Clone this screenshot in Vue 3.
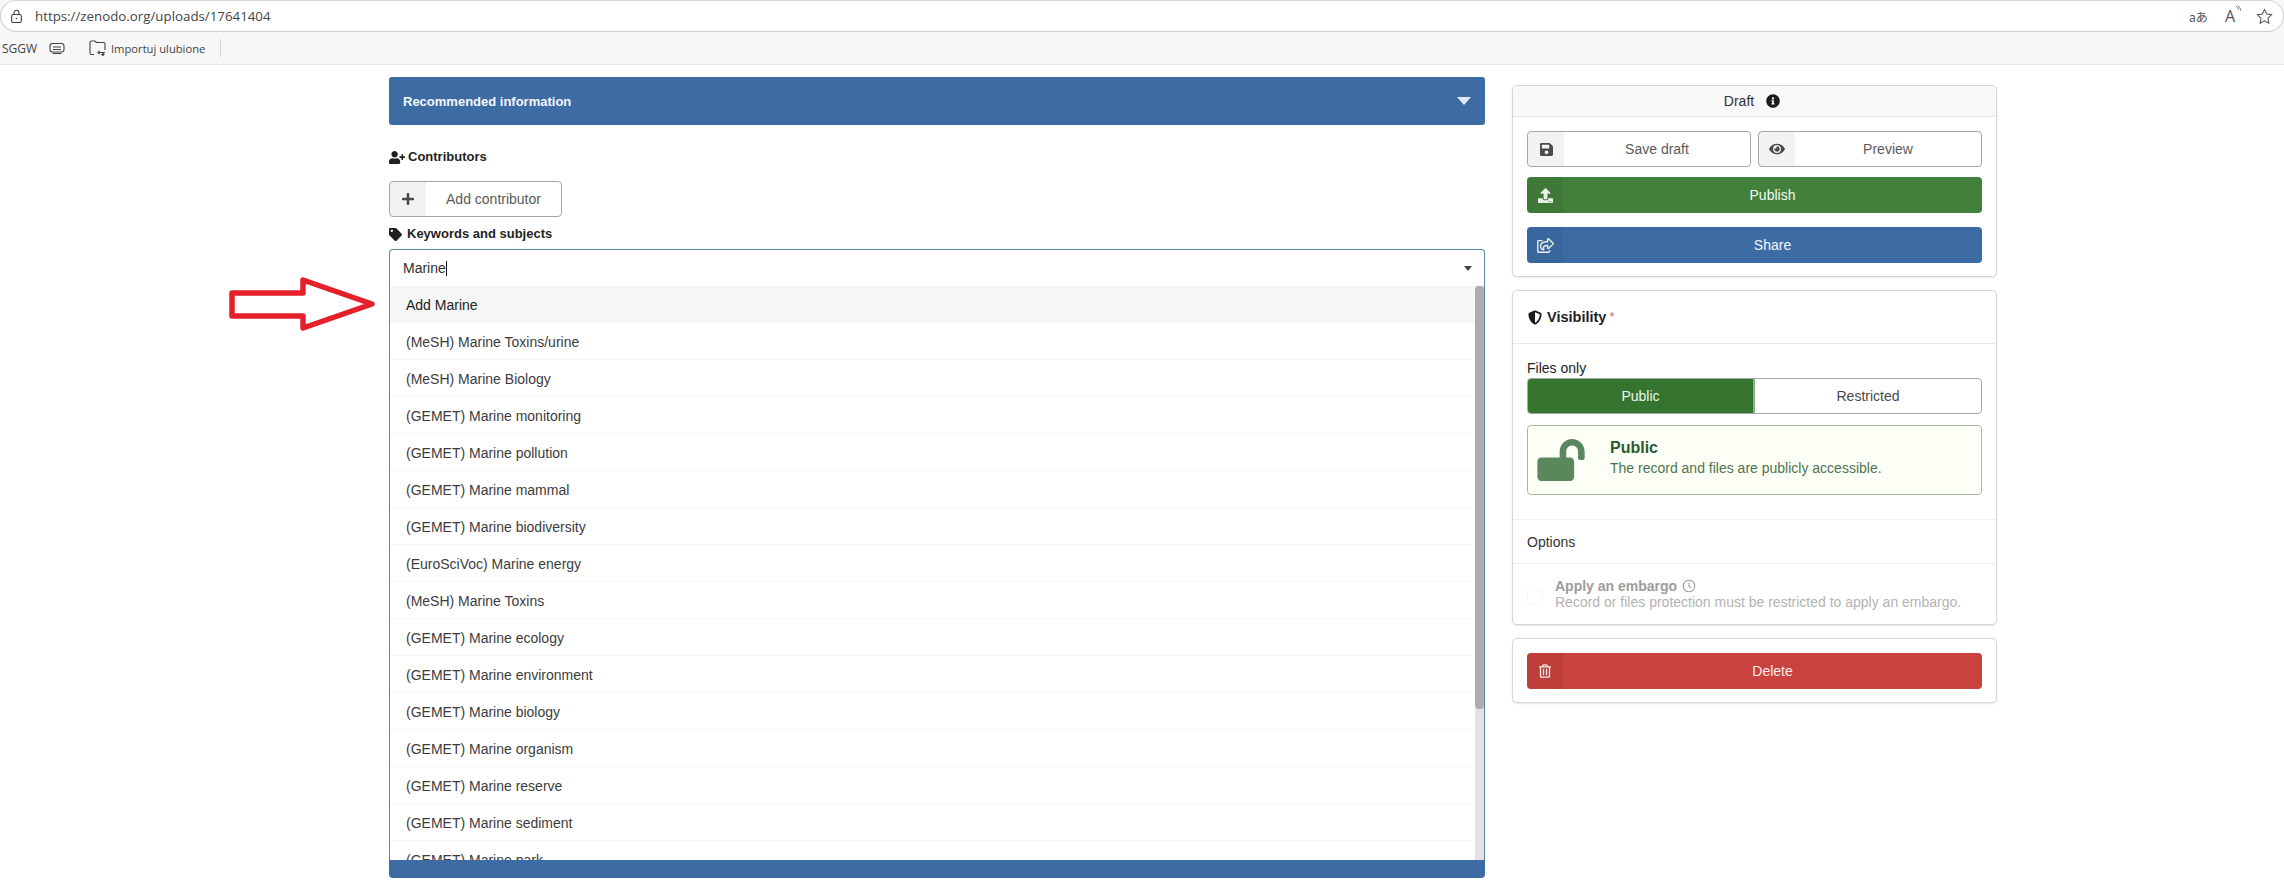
<script setup>
const options = [
  '(MeSH) Marine Toxins/urine', '(MeSH) Marine Biology', '(GEMET) Marine monitoring',
  '(GEMET) Marine pollution', '(GEMET) Marine mammal', '(GEMET) Marine biodiversity',
  '(EuroSciVoc) Marine energy', '(MeSH) Marine Toxins', '(GEMET) Marine ecology',
  '(GEMET) Marine environment', '(GEMET) Marine biology', '(GEMET) Marine organism',
  '(GEMET) Marine reserve', '(GEMET) Marine sediment', '(GEMET) Marine park'
]
const icons = {
  save: ['0 0 448 512', 'M433.941 129.941l-83.882-83.882A48 48 0 0 0 316.118 32H48C21.49 32 0 53.49 0 80v352c0 26.51 21.49 48 48 48h352c26.51 0 48-21.49 48-48V163.882a48 48 0 0 0-14.059-33.941zM224 416c-35.346 0-64-28.654-64-64 0-35.346 28.654-64 64-64s64 28.654 64 64c0 35.346-28.654 64-64 64zm96-304.52V212c0 6.627-5.373 12-12 12H76c-6.627 0-12-5.373-12-12V108c0-6.627 5.373-12 12-12h228.52c3.183 0 6.235 1.264 8.485 3.515l3.48 3.48A11.996 11.996 0 0 1 320 111.48z'],
  eye: ['0 0 576 512', 'M572.52 241.4C518.29 135.59 410.93 64 288 64S57.68 135.64 3.48 241.41a32.35 32.35 0 0 0 0 29.19C57.71 376.41 165.07 448 288 448s230.32-71.64 284.52-177.41a32.35 32.35 0 0 0 0-29.19zM288 400a144 144 0 1 1 144-144 143.93 143.93 0 0 1-144 144zm0-240a95.31 95.31 0 0 0-25.31 3.79 47.85 47.85 0 0 1-66.9 66.9A95.78 95.78 0 1 0 288 160z'],
  plus: ['0 0 448 512', 'M416 208H272V64c0-17.67-14.33-32-32-32h-32c-17.67 0-32 14.33-32 32v144H32c-17.67 0-32 14.33-32 32v32c0 17.67 14.33 32 32 32h144v144c0 17.67 14.33 32 32 32h32c17.67 0 32-14.33 32-32V304h144c17.67 0 32-14.33 32-32v-32c0-17.67-14.33-32-32-32z'],
  upload: ['0 0 512 512', 'M296 384h-80c-13.3 0-24-10.7-24-24V192h-87.7c-17.8 0-26.7-21.5-14.1-34.1L242.3 5.7c7.5-7.5 19.8-7.5 27.3 0l152.2 152.2c12.6 12.6 3.7 34.1-14.1 34.1H320v168c0 13.3-10.7 24-24 24zm216-8v112c0 13.3-10.7 24-24 24H24c-13.3 0-24-10.7-24-24V376c0-13.3 10.7-24 24-24h136v8c0 30.9 25.1 56 56 56h80c30.9 0 56-25.1 56-56v-8h136c13.3 0 24 10.7 24 24zm-124 88c0-11-9-20-20-20s-20 9-20 20 9 20 20 20 20-9 20-20zm64 0c0-11-9-20-20-20s-20 9-20 20 9 20 20 20 20-9 20-20z'],
  info: ['0 0 512 512', 'M256 8C119.043 8 8 119.083 8 256c0 136.997 111.043 248 248 248s248-111.003 248-248C504 119.083 392.957 8 256 8zm0 110c23.196 0 42 18.804 42 42s-18.804 42-42 42-42-18.804-42-42 18.804-42 42-42zm56 254c0 6.627-5.373 12-12 12h-88c-6.627 0-12-5.373-12-12v-24c0-6.627 5.373-12 12-12h12v-64h-12c-6.627 0-12-5.373-12-12v-24c0-6.627 5.373-12 12-12h64c6.627 0 12 5.373 12 12v100h12c6.627 0 12 5.373 12 12v24z'],
  tag: ['0 0 512 512', 'M0 252.118V48C0 21.49 21.49 0 48 0h204.118a48 48 0 0 1 33.941 14.059l211.882 211.882c18.745 18.745 18.745 49.137 0 67.882L293.823 497.941c-18.745 18.745-49.137 18.745-67.882 0L14.059 286.059A48 48 0 0 1 0 252.118zM112 64c-26.51 0-48 21.49-48 48s21.49 48 48 48 48-21.49 48-48-21.49-48-48-48z'],
  userPlus: ['0 0 640 512', 'M624 208h-64v-64c0-8.8-7.2-16-16-16h-32c-8.8 0-16 7.2-16 16v64h-64c-8.8 0-16 7.2-16 16v32c0 8.8 7.2 16 16 16h64v64c0 8.8 7.2 16 16 16h32c8.8 0 16-7.2 16-16v-64h64c8.8 0 16-7.2 16-16v-32c0-8.8-7.2-16-16-16zm-400 48c70.7 0 128-57.3 128-128S294.7 0 224 0 96 57.3 96 128s57.3 128 128 128zm89.6 32h-16.7c-22.2 10.2-46.9 16-72.9 16s-50.6-5.8-72.9-16h-16.7C60.2 288 0 348.2 0 422.4V464c0 26.5 21.5 48 48 48h352c26.5 0 48-21.5 48-48v-41.6c0-74.2-60.2-134.4-134.4-134.4z'],
  shield: ['0 0 512 512', 'M466.5 83.7l-192-80a48.15 48.15 0 0 0-36.9 0l-192 80C27.7 91.1 16 108.6 16 128c0 198.5 114.5 335.7 221.5 380.3 11.8 4.9 25.1 4.9 36.9 0C360.1 472.6 496 349.3 496 128c0-19.4-11.7-36.9-29.5-44.3zM256.1 446.3l-.1-381 175.9 73.3c-3.3 151.4-82.1 261.1-175.8 307.7z'],
  unlock: ['0 0 576 512', 'M423.5 0C339.5.3 272 69.5 272 153.5V224H48c-26.5 0-48 21.5-48 48v192c0 26.5 21.5 48 48 48h352c26.5 0 48-21.5 48-48V272c0-26.5-21.5-48-48-48h-48v-71.1c0-39.6 31.7-72.5 71.3-72.9 40-.4 72.7 32.1 72.7 72v80c0 13.3 10.7 24 24 24h32c13.3 0 24-10.7 24-24v-80C576 68 507.5-.3 423.5 0z'],
  trash: ['0 0 448 512', 'M268 416h24a12 12 0 0 0 12-12V188a12 12 0 0 0-12-12h-24a12 12 0 0 0-12 12v216a12 12 0 0 0 12 12zM432 80h-82.41l-34-56.7A48 48 0 0 0 274.41 0H173.59a48 48 0 0 0-41.16 23.3L98.41 80H16A16 16 0 0 0 0 96v16a16 16 0 0 0 16 16h16v336a48 48 0 0 0 48 48h288a48 48 0 0 0 48-48V128h16a16 16 0 0 0 16-16V96a16 16 0 0 0-16-16zM171.84 50.91A6 6 0 0 1 177 48h94a6 6 0 0 1 5.15 2.91L293.61 80H154.39zM368 464H80V128h288zm-212-48h24a12 12 0 0 0 12-12V188a12 12 0 0 0-12-12h-24a12 12 0 0 0-12 12v216a12 12 0 0 0 12 12z'],
  share: ['0 0 576 512', 'M561.938 158.06L417.94 14.092C387.926-15.922 336 5.097 336 48.032v57.198c-42.45 1.88-84.03 6.55-120.76 17.99-35.17 10.95-63.07 27.58-82.91 49.42C108.22 199.2 96 232.6 96 271.94c0 61.697 33.178 112.455 84.87 144.76 37.546 23.508 85.248-12.651 71.02-55.74-15.515-47.119-17.156-70.923 84.11-78.76V336c0 42.993 51.968 63.913 81.94 33.94l143.998-144c18.75-18.74 18.75-49.14 0-67.88zM384 336V232.16C255.309 234.082 166.492 255.35 206.31 376 176.79 357.55 144 324.08 144 271.94c0-109.334 129.14-118.947 240-119.85V48l144 144-144 144zm24.74 84.493a82.658 82.658 0 0 0 20.974-9.303c7.976-4.952 18.286.826 18.286 10.214V464c0 26.51-21.49 48-48 48H48c-26.51 0-48-21.49-48-48V112c0-26.51 21.49-48 48-48h132c6.627 0 12 5.373 12 12v4.486c0 4.917-2.987 9.369-7.569 11.152-13.702 5.331-26.396 11.537-38.05 18.585a12.138 12.138 0 0 1-6.28 1.777H54a6 6 0 0 0-6 6v340a6 6 0 0 0 6 6h340a6 6 0 0 0 6-6v-25.966c0-5.37 3.579-10.059 8.74-11.541z']
}
</script>

<template>
  <div class="page">
    <header class="chrome">
      <div class="address">
        <svg class="lock" viewBox="0 0 16 18" width="13" height="15" fill="none" stroke="#3c3c3c" stroke-width="1.3">
          <rect x="2" y="6.5" width="12" height="10" rx="2.2" />
          <path d="M5 6.5V4.2a3 3 0 0 1 6 0v2.3" />
          <circle cx="8" cy="11.5" r=".9" fill="#3c3c3c" stroke="none" />
        </svg>
        <span class="url">https://zenodo.org/uploads/17641404</span>
        <span class="addr-tools">
          <span class="translate">aあ</span>
          <span class="read">A<svg viewBox="0 0 8 10" width="7" height="9" fill="none" stroke="#555" stroke-width=".9"><path d="M1 1q3 2 3 4M3.500 .5q3 2.500 3 6" /></svg></span>
          <svg viewBox="0 0 18 18" width="17" height="17" fill="none" stroke="#555" stroke-width="1.1"><path d="M9 1.500l2.300 4.900 5.200.7-3.800 3.700.9 5.300L9 13.500l-4.600 2.600.9-5.300L1.500 7.100l5.200-.7z" /></svg>
        </span>
      </div>
      <nav class="bookmarks">
        <span class="bm-first">SGGW</span>
        <svg class="bm-device" viewBox="0 0 16 13" width="16" height="13" fill="none" stroke="#444" stroke-width="1.1">
          <rect x="1" y="1.500" width="14" height="8.500" rx="2.500" />
          <path d="M4 5h8M4 7.500h8M3.500 11.500h9" />
        </svg>
        <svg class="bm-folder" viewBox="0 0 17 16" width="17" height="16" fill="none" stroke="#444" stroke-width="1.1">
          <path d="M5 14.500H2.500a1.500 1.500 0 0 1-1.500-1.500V2.500A1.500 1.500 0 0 1 2.500 1H6l1.500 1.500h7A1.500 1.500 0 0 1 16 4v6" />
          <path d="M16 12.500H9m1.500-1.500L9 12.500l1.500 1.500M12 14.500h3m-1.500-1.500l1.500 1.500-1.500 1.500" />
        </svg>
        <span class="bm-text">Importuj ulubione</span>
        <i class="bm-sep"></i>
      </nav>
    </header>

    <main class="main">
      <section class="left">
        <div class="bar">
          <span>Recommended information</span>
          <svg viewBox="0 0 14 8" width="14" height="8"><path d="M0 0h14L7 8z" fill="#fff" fill-opacity=".85" /></svg>
        </div>

        <h3 class="field-label contributors">
          <svg :viewBox="icons.userPlus[0]" width="16" height="13"><path :d="icons.userPlus[1]" /></svg>
          Contributors
        </h3>
        <button class="btn basic add-contrib">
          <span class="btn-icon"><svg :viewBox="icons.plus[0]" width="12" height="14"><path :d="icons.plus[1]" /></svg></span>
          <span class="btn-text">Add contributor</span>
        </button>

        <h3 class="field-label keywords">
          <svg :viewBox="icons.tag[0]" width="13" height="13"><path :d="icons.tag[1]" /></svg>
          Keywords and subjects
        </h3>
        <div class="dropdown">
          <div class="search">
            <span class="typed">Marine</span><i class="caret"></i>
            <svg class="arrow" viewBox="0 0 8 5" width="8" height="5"><path d="M0 0h8L4 5z" fill="#444" /></svg>
          </div>
          <div class="menu">
            <ul class="items">
              <li class="item active">Add Marine</li>
              <li v-for="o in options" :key="o" class="item">{{ o }}</li>
            </ul>
            <div class="scrollbar"><div class="thumb"></div></div>
          </div>
        </div>
        <div class="under-strip"></div>
      </section>

      <aside class="right">
        <div class="card">
          <div class="card-head">
            <span>Draft</span>
            <svg :viewBox="icons.info[0]" width="14" height="14"><path :d="icons.info[1]" fill="#1b1c1d" /></svg>
          </div>
          <div class="card-body actions">
            <div class="pair">
              <button class="btn basic">
                <span class="btn-icon"><svg :viewBox="icons.save[0]" width="13" height="15"><path :d="icons.save[1]" /></svg></span>
                <span class="btn-text">Save draft</span>
              </button>
              <button class="btn basic">
                <span class="btn-icon"><svg :viewBox="icons.eye[0]" width="16" height="14"><path :d="icons.eye[1]" /></svg></span>
                <span class="btn-text">Preview</span>
              </button>
            </div>
            <button class="btn green">
              <span class="btn-icon"><svg :viewBox="icons.upload[0]" width="15" height="15"><path :d="icons.upload[1]" /></svg></span>
              <span class="btn-text">Publish</span>
            </button>
            <button class="btn blue share">
              <span class="btn-icon"><svg :viewBox="icons.share[0]" width="17" height="15"><path :d="icons.share[1]" /></svg></span>
              <span class="btn-text">Share</span>
            </button>
          </div>
        </div>

        <div class="card">
          <div class="vis-title">
            <svg :viewBox="icons.shield[0]" width="14" height="15"><path :d="icons.shield[1]" fill="#1b1c1d" /></svg>
            <strong>Visibility</strong><span class="req">*</span>
          </div>
          <div class="vis-body">
            <div class="files-only">Files only</div>
            <div class="toggle">
              <span class="on">Public</span>
              <span class="off">Restricted</span>
            </div>
            <div class="message">
              <svg :viewBox="icons.unlock[0]" width="48" height="42"><path :d="icons.unlock[1]" fill="#5b875c" /></svg>
              <div class="msg-copy">
                <div class="msg-head">Public</div>
                <div class="msg-text">The record and files are publicly accessible.</div>
              </div>
            </div>
          </div>
          <div class="options">Options</div>
          <div class="embargo">
            <i class="checkbox"></i>
            <div>
              <div class="emb-head">
                Apply an embargo
                <svg viewBox="0 0 16 16" width="14" height="14" fill="none" stroke="#9a9a9a" stroke-width="1.2"><circle cx="8" cy="8" r="6.600" /><path d="M8 4v4.200l2.600 1.800" /></svg>
              </div>
              <div class="emb-sub">Record or files protection must be restricted to apply an embargo.</div>
            </div>
          </div>
        </div>

        <div class="card delete-card">
          <button class="btn red">
            <span class="btn-icon"><svg :viewBox="icons.trash[0]" width="12" height="14"><path :d="icons.trash[1]" /></svg></span>
            <span class="btn-text">Delete</span>
          </button>
        </div>
      </aside>
    </main>

    <svg class="annotation" viewBox="0 0 150 56" width="150" height="56" fill="none">
      <path d="M3 16H74V3L143 27 74 51V39H3Z" stroke="#e5202b" stroke-width="5.500" stroke-linejoin="round" />
    </svg>
  </div>
</template>

<style>
html, body { margin: 0; background: #fff; overflow: hidden; }
</style>

<style scoped>
* { box-sizing: border-box; }
.page {
  position: relative;
  width: 2284px;
  height: 896px;
  overflow: hidden;
  font-family: "Liberation Sans", Arial, sans-serif;
  font-size: 14px;
  color: #212121;
}
.chrome {
  height: 65px;
  background: #f7f7f7;
  border-bottom: 1px solid #e6e6e6;
}
.address {
  height: 32px;
  display: flex;
  align-items: center;
  padding: 0 10px 0 9px;
  background: #fff;
  border: 1px solid #cfcfcf;
  border-top-color: #d8d8d8;
  border-radius: 16px;
  font-family: "Open Sans", sans-serif;
}
.lock { margin-right: 12px; }
.url { font-size: 13.300px; color: #444; }
.addr-tools {
  margin-left: auto;
  display: flex;
  align-items: center;
  color: #555;
}
.translate { font: 12px "Noto Sans CJK JP", "Noto Sans", sans-serif; margin-right: 17px; }
.read { font: 16px "Open Sans", sans-serif; margin-right: 14px; display: flex; align-items: flex-start; }
.bookmarks {
  height: 32px;
  display: flex;
  align-items: center;
  font: 11.200px "Open Sans", sans-serif;
  color: #444;
  padding-left: 2px;
}
.bm-first { width: 46px; font-size: 12px; }
.bm-device { margin-right: 24px; margin-left: 1px; }
.bm-folder { margin-right: 5px; }
.bm-sep { width: 1px; height: 18px; background: #d6d6d6; margin-left: 15px; }

.main {
  display: flex;
  gap: 27px;
  padding: 12px 0 0 389px;
}
.left { width: 1096px; flex: none; }
.bar {
  height: 48px;
  display: flex;
  align-items: center;
  justify-content: space-between;
  padding: 0 14px;
  background: #3d6ca5;
  border-radius: 3px;
  color: #f4f7fb;
  font-weight: 700;
  font-size: 13px;
}
.field-label {
  margin: 0;
  height: 20px;
  display: flex;
  align-items: center;
  gap: 4px;
  font-size: 13px;
  line-height: 20px;
  font-weight: 700;
  color: #1f1f1f;
}
.field-label svg { fill: #1f1f1f; flex: none; }
.contributors { margin-top: 22px; gap: 3px; }
.keywords { margin-top: 7px; gap: 5px; }

.btn {
  display: flex;
  align-items: stretch;
  width: 100%;
  height: 36px;
  padding: 0;
  border: 0;
  border-radius: 4px;
  overflow: hidden;
  font: 14px "Liberation Sans", Arial, sans-serif;
  background: #fff;
}
.btn.add-contrib { width: 173px; margin-top: 14px; }
.btn-icon {
  width: 36px;
  flex: none;
  display: flex;
  align-items: center;
  justify-content: center;
  background: rgba(0, 0, 0, .05);
}
.btn-text { flex: 1; align-self: center; text-align: center; }
.btn.basic { border: 1px solid #a6a6a6; color: #5a5a5a; }
.btn.basic svg { fill: #4a4a4a; }
.btn.green { background: #43803b; color: #f4fbf2; margin-top: 10px; }
.btn.blue { background: #3d6ca5; color: #f3f7fb; }
.btn.red { background: #c9423e; color: #fbeeee; }
.btn.green svg, .btn.blue svg, .btn.red svg { fill: #e8f0e8; }
.share { margin-top: 14px; }

.dropdown {
  height: 611px;
  margin-top: 5px;
  display: flex;
  flex-direction: column;
  border: 1px solid #5a87a6;
  border-bottom: 0;
  border-radius: 4px 4px 0 0;
  background: #fff;
  overflow: hidden;
}
.search {
  height: 36px;
  flex: none;
  display: flex;
  align-items: center;
  padding: 0 12px 0 13px;
  color: #2e2e2e;
}
.caret { width: 1px; height: 15px; background: #111; }
.arrow { margin-left: auto; }
.menu { flex: 1; min-height: 0; display: flex; }
.items { flex: 1; margin: 0; padding: 0; list-style: none; overflow: hidden; }
.item {
  height: 37px;
  line-height: 38px;
  padding-left: 16px;
  color: #3c3c3c;
  border-bottom: 1px solid #f6f6f6;
}
.item.active { background: #f6f6f6; color: #222; }
.scrollbar { width: 9px; flex: none; background: #e2e2e2; }
.thumb { height: 423px; background: #adadad; border-radius: 4px; }
.under-strip {
  height: 18px;
  background: #3d6ca5;
  border-radius: 0 0 4px 4px;
}

.right { width: 485px; flex: none; padding-top: 8px; display: flex; flex-direction: column; gap: 13px; }
.card {
  border: 1px solid #d6d6d6;
  border-radius: 5px;
  background: #fff;
  box-shadow: 0 1px 2px rgba(34, 36, 38, .1);
  overflow: hidden;
}
.card-head {
  height: 31px;
  display: flex;
  align-items: center;
  justify-content: center;
  gap: 12px;
  padding-right: 5px;
  background: #f8f8f8;
  border-bottom: 1px solid #e6e6e6;
  color: #333;
}
.card-body { padding: 14px 14px 13px; }
.pair { display: grid; grid-template-columns: 1fr 1fr; gap: 7px; }
.vis-title {
  height: 53px;
  display: flex;
  align-items: center;
  padding-left: 15px;
  font-size: 14.500px;
  color: #222;
  border-bottom: 1px solid #ebebeb;
}
.vis-title svg { margin-right: 5px; }
.req { color: #c9716f; margin-left: 3px; font-size: 13px; align-self: flex-start; margin-top: 18px; }
.vis-body { padding: 16px 14px 24px; height: 175px; }
.files-only { height: 18px; line-height: 16px; color: #222; }
.toggle {
  height: 36px;
  display: flex;
  border: 1px solid #a6a6a6;
  border-radius: 4px;
  overflow: hidden;
}
.toggle span { display: flex; align-items: center; justify-content: center; }
.on { width: 227px; flex: none; background: #35742f; color: #eef7ec; border-right: 2px solid #8fae8b; }
.off { flex: 1; color: #4a4a4a; }
.message {
  height: 70px;
  margin-top: 11px;
  display: flex;
  align-items: center;
  gap: 25px;
  padding: 0 0 0 9px;
  background: #fcfff5;
  border: 1px solid #a9b8a2;
  border-radius: 4px;
  color: #4f7350;
}
.msg-copy { margin-bottom: 5px; }
.msg-head { font-weight: 700; font-size: 16px; color: #2c5a2e; line-height: 20px; margin-bottom: 1px; }
.msg-text { line-height: 18px; }
.options {
  height: 45px;
  display: flex;
  align-items: center;
  padding-left: 14px;
  color: #333;
  border-top: 1px solid #efefef;
  border-bottom: 1px solid #efefef;
}
.embargo {
  height: 60px;
  display: flex;
  align-items: center;
  gap: 12px;
  padding: 0 14px;
}
.checkbox { width: 16px; height: 16px; flex: none; border: 1px solid #f6f6f6; border-radius: 3px; margin-top: 5px; }
.emb-head { display: flex; align-items: center; gap: 5px; font-weight: 700; color: #9c9c9c; line-height: 16px; }
.emb-sub { color: #b3b3b3; line-height: 16px; }
.delete-card { padding: 14px 14px 13px; }

.annotation { position: absolute; left: 229px; top: 277px; }
</style>
